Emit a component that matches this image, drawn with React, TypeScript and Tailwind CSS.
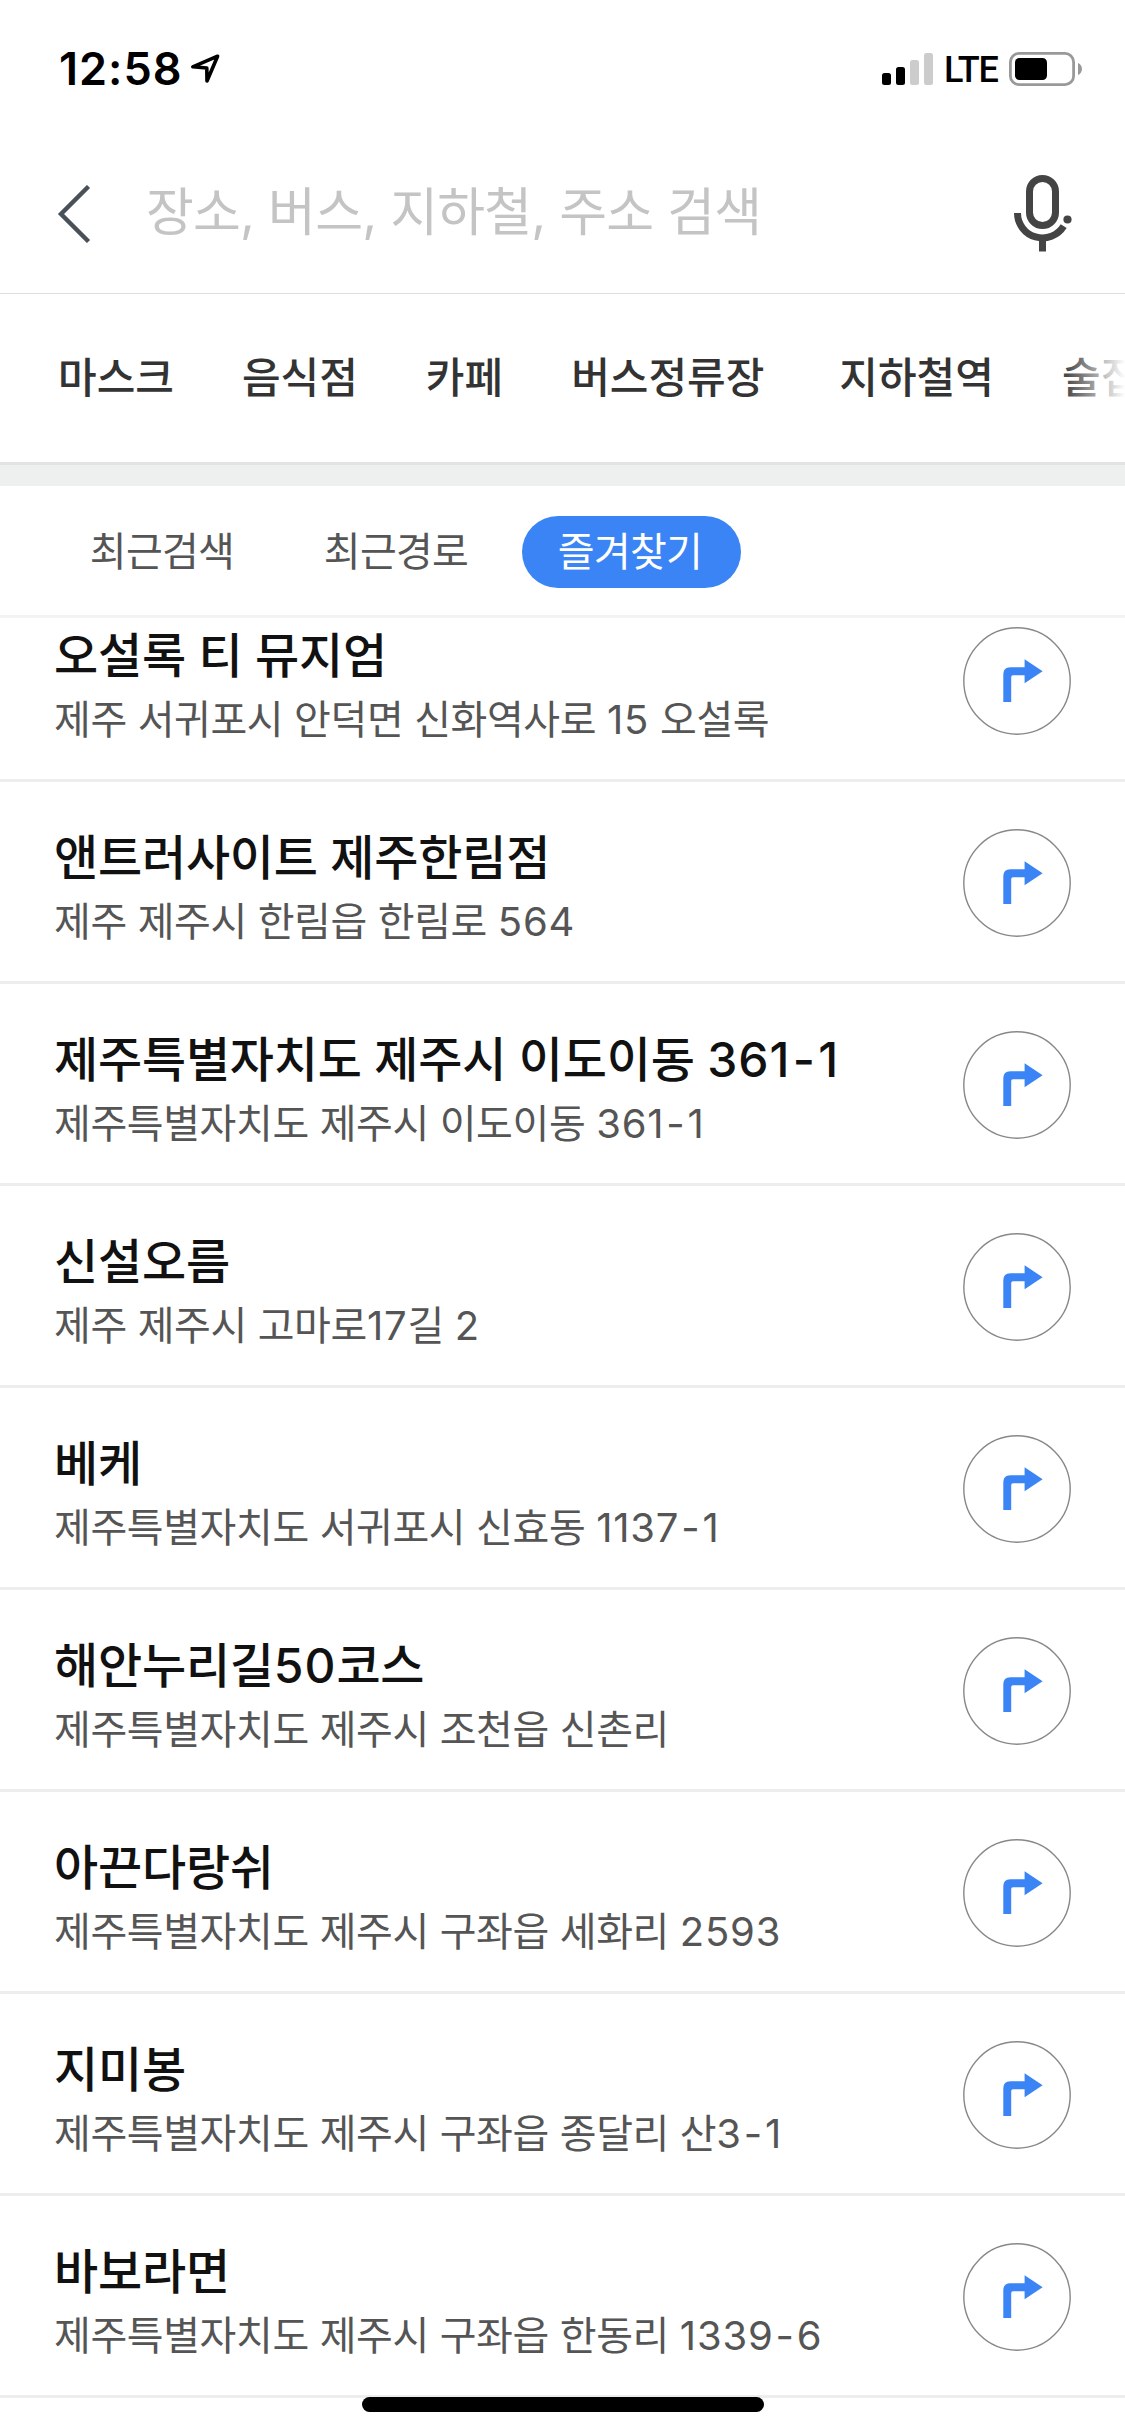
import { useState } from 'react';

interface Place {
  name: string;
  address: string;
}

const categories = ['마스크', '음식점', '카페', '버스정류장', '지하철역', '술집'];

const tabs = ['최근검색', '최근경로', '즐겨찾기'];

const places: Place[] = [
  { name: '오설록 티 뮤지엄', address: '제주 서귀포시 안덕면 신화역사로 15 오설록' },
  { name: '앤트러사이트 제주한림점', address: '제주 제주시 한림읍 한림로 564' },
  { name: '제주특별자치도 제주시 이도이동 361-1', address: '제주특별자치도 제주시 이도이동 361-1' },
  { name: '신설오름', address: '제주 제주시 고마로17길 2' },
  { name: '베케', address: '제주특별자치도 서귀포시 신효동 1137-1' },
  { name: '해안누리길50코스', address: '제주특별자치도 제주시 조천읍 신촌리' },
  { name: '아끈다랑쉬', address: '제주특별자치도 제주시 구좌읍 세화리 2593' },
  { name: '지미봉', address: '제주특별자치도 제주시 구좌읍 종달리 산3-1' },
  { name: '바보라면', address: '제주특별자치도 제주시 구좌읍 한동리 1339-6' },
];

const StatusBar = () => (
  <div className="flex h-[138px] items-start justify-between pt-[51px] pr-[43px] pl-[59px] text-black">
    <div className="flex items-start">
      <span className="w-[121px] text-[45px] leading-9 font-semibold tracking-[1px]">12:58</span>
      <svg className="mt-[2px] ml-[9px] h-[32px] w-[32px]" viewBox="0 0 32 32" fill="none">
        <path
          d="M28.6 3.2 L3.8 13.8 L17.8 15 L18 28 Z"
          stroke="currentColor"
          strokeWidth="3.6"
          strokeLinejoin="round"
        />
      </svg>
    </div>
    <div className="flex items-start">
      <svg className="mt-[2px] h-[32px] w-[51px]" viewBox="0 0 51 32">
        <rect x="0" y="20" width="9" height="12" rx="2.5" />
        <rect x="14" y="14" width="9" height="18" rx="2.5" />
        <rect x="28" y="7" width="9" height="25" rx="2.5" fill="#cccccc" />
        <rect x="42" y="0" width="9" height="32" rx="2.5" fill="#cccccc" />
      </svg>
      <span className="ml-[11px] w-[53px] font-[Roboto,sans-serif] text-[36px] leading-[38px] font-medium tracking-[-1.2px]">
        LTE
      </span>
      <svg className="mt-px ml-3 h-[34px] w-[73px]" viewBox="0 0 73 34">
        <rect x="1.4" y="1.4" width="63.2" height="31.2" rx="8.6" fill="none" stroke="#999999" strokeWidth="2.8" />
        <rect x="6" y="6" width="32" height="22" rx="4.5" />
        <path d="M69 11 C74.3 13 74.3 21 69 23 Z" fill="#999999" />
      </svg>
    </div>
  </div>
);

const SearchHeader = () => (
  <header className="flex h-[156px] items-center border-b border-[#dedede] pr-[53px] pb-[3px] pl-[57px]">
    <svg className="h-[58px] w-[34px]" viewBox="0 0 34 58" fill="none">
      <path d="M31.5 1.5 L4 29 L31.5 56.5" stroke="#485058" strokeWidth="4.4" />
    </svg>
    <p className="ml-[55px] flex-1 pb-[2px] text-[52px] leading-[60px] tracking-[-0.8px] text-[#c4c4c4]">
      장소, 버스, 지하철, 주소 검색
    </p>
    <svg className="mb-[2px] h-[77px] w-[58px]" viewBox="0 0 58 77" fill="none">
      <rect x="15.5" y="3.5" width="26" height="47" rx="13" stroke="#444444" strokeWidth="7" />
      <path d="M3.5 38 A25 25 0 0 0 49.7 51.2" stroke="#444444" strokeWidth="7" />
      <path d="M28.5 64 V76.5" stroke="#444444" strokeWidth="7" />
      <circle cx="53.5" cy="44.5" r="4.1" fill="#444444" />
    </svg>
  </header>
);

const CategoryBar = () => (
  <nav className="relative flex h-[168px] items-center gap-[68px] overflow-hidden pl-[58px]">
    {categories.map((category) => (
      <span
        key={category}
        className={`shrink-0 text-[42px] leading-[50px] font-[450] whitespace-nowrap text-[#333333] ${
          category === '버스정류장' ? 'mr-[7px]' : ''
        }`}
      >
        {category}
      </span>
    ))}
    {/* Fades out the chip that is cut off by the edge */}
    <div className="absolute inset-y-0 right-0 w-[66px] bg-linear-to-r from-white/0 to-white" />
  </nav>
);

// Digits and hyphens run narrower than the hangul around them, so they get extra room
const Spaced = ({ text }: { text: string }) => (
  <>
    {text.split(/(\d+|-)/).map((part, i) => {
      if (i % 2 === 0) return part;
      return (
        <span key={i} className={part === '-' ? 'mx-[0.05em] tracking-[0.02em]' : 'tracking-[0.02em]'}>
          {part}
        </span>
      );
    })}
  </>
);

const TurnIcon = () => (
  <svg className="size-[108px]" viewBox="0 0 108 108">
    <circle cx="54" cy="54" r="53.2" fill="none" stroke="#888888" strokeWidth="1.4" />
    <path
      d="M40.3 75 V47.3 Q40.3 40.3 47.3 40.3 H61.6 V32.3 L79.6 44.2 L61.6 56.2 V48.3 H50 Q48.2 48.3 48.2 50 V75 Z"
      fill="#3a84f6"
    />
  </svg>
);

const PlaceRow = ({ name, address }: Place) => (
  <li className="flex h-[202px] items-start justify-between border-b-3 border-[#ededed] pt-[47px] pr-[54px] pl-[54px]">
    <div>
      <h2 className="pt-px text-[48px] leading-[56px] font-medium tracking-[-0.2px] text-[#111111]">
        <Spaced text={name} />
      </h2>
      <p className="mt-[11px] text-[40px] leading-[50px] tracking-[-0.4px] text-[#555555]">
        <Spaced text={address} />
      </p>
    </div>
    <button className="rounded-full">
      <TurnIcon />
    </button>
  </li>
);

const App = () => {
  const [activeTab, setActiveTab] = useState('즐겨찾기');

  return (
    <div className="relative flex h-[2436px] w-[1125px] flex-col overflow-hidden bg-white font-[Inter,'Noto_Sans_CJK_KR',sans-serif]">
      <StatusBar />
      <SearchHeader />
      <CategoryBar />
      <div className="h-6 shrink-0 border-t-3 border-[#e3e3e3] bg-[#eef0f0]" />

      <div className="flex h-[132px] shrink-0 items-center gap-[15px] border-b-3 border-[#f3f3f3] pt-[3px] pl-[54px]">
        {tabs.map((tab) => (
          <button
            key={tab}
            onClick={() => setActiveTab(tab)}
            className={`flex h-[72px] w-[219px] items-center justify-center rounded-full pr-[3px] text-[40px] tracking-[-0.7px] ${
              tab === activeTab ? 'bg-[#3a84f6] text-white' : 'text-[#555555]'
            }`}
          >
            {tab}
          </button>
        ))}
      </div>

      {/* List is scrolled a little, so the first row sits partly under the tabs */}
      <div className="flex-1 overflow-hidden">
        <ul className="-mt-[38px]">
          {places.map((place) => (
            <PlaceRow key={place.name} {...place} />
          ))}
        </ul>
      </div>

      {/* Home indicator */}
      <div className="absolute bottom-6 left-[362px] h-[15px] w-[402px] rounded-full bg-black" />
    </div>
  );
};

export default App;
